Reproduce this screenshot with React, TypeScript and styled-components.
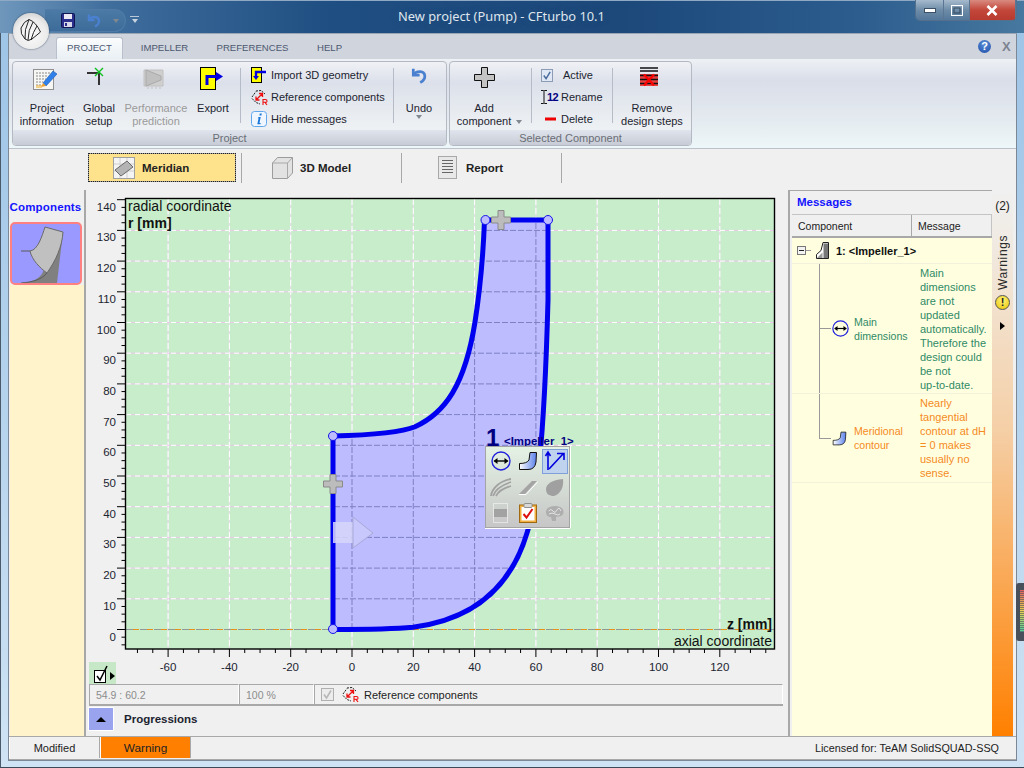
import React from "react";
import styled, { createGlobalStyle } from "styled-components";

const GlobalStyle = createGlobalStyle`
  html, body {
    margin: 0;
    padding: 0;
    width: 1024px;
    height: 768px;
    overflow: hidden;
    font-family: "Liberation Sans", Arial, sans-serif;
    font-size: 11.5px;
    color: #1c2430;
  }
  * { box-sizing: border-box; }
`;

const Win = styled.div`
  position: relative;
  width: 1024px;
  height: 768px;
  display: flex;
  flex-direction: column;
  background: linear-gradient(180deg, #9cc3e6 0, #b9d5ee 60%, #cfe3f4 100%);
  border-bottom: 1px solid #3c4a58;
  border-left: 1px solid #4a5a6a;
  padding-bottom: 6px;
`;

const TitleBar = styled.div`
  height: 33px;
  margin-left: -1px;
  display: flex;
  align-items: flex-start;
  border-top: 1px solid #8fa9c4;
  background: linear-gradient(90deg, #6f97bc 0, #3f6d9c 110px, #1f4e82 330px, #1c487a 620px, #2c5d8e 860px, #47789f 1024px);
`;

const Logo = styled.div`
  position: absolute;
  left: 12px;
  top: 13px;
  width: 36px;
  height: 36px;
  border-radius: 50%;
  background: radial-gradient(circle at 50% 60%, #fafafa 0, #ececec 55%, #bdbdbd 100%);
  box-shadow: 0 0 2px #33475c;
  display: flex;
  align-items: center;
  justify-content: center;
  z-index: 2;
`;

const Qat = styled.div`
  margin: 8px 0 0 45px;
  width: 81px;
  height: 23px;
  padding-left: 16px;
  display: flex;
  align-items: center;
  gap: 12px;
  border: 1px solid #4f7ba6;
  border-left: none;
  border-radius: 0 12px 12px 0;
  background: linear-gradient(180deg, #4c7aa6, #3e6c9a);
`;

const QatMore = styled.span`
  margin: 15px 0 0 4px;
  width: 9px;
  height: 8px;
  border-top: 1px solid #b8c8d8;
  &::after {
    content: "";
    display: block;
    margin: 2px auto 0;
    width: 0;
    border: 3.5px solid transparent;
    border-top: 4px solid #c8d4e0;
    border-bottom: none;
  }
`;

const Caret = styled.span<{ $inline?: boolean }>`
  display: inline-block;
  width: 0;
  border: 3px solid transparent;
  border-top: 4px solid #808890;
  border-bottom: none;
  vertical-align: middle;
  margin-left: ${(p) => (p.$inline ? "5px" : "0")};
  margin-right: ${(p) => (p.$inline ? "-11px" : "0")};
`;

const Title = styled.div`
  margin: 6px 0 0 259px;
  font-family: "Noto Sans", sans-serif;
  font-size: 12.85px;
  line-height: 18px;
  color: #dfe6ee;
  text-shadow: 0 0 6px #2a4f78;
  white-space: nowrap;
`;

const WinButtons = styled.div`
  margin-left: auto;
  margin-top: -1px;
  margin-right: 7px;
  width: 102px;
  height: 21px;
  display: flex;
  border: 1px solid #54708c;
  border-top: none;
  border-radius: 0 0 5px 5px;
  overflow: hidden;
`;

const WinBtn = styled.div<{ $close?: boolean; $w: number }>`
  width: ${(p) => p.$w}px;
  display: flex;
  align-items: center;
  justify-content: center;
  border-right: 1px solid #5a7692;
  background: ${(p) =>
    p.$close
      ? "linear-gradient(180deg, #d98a80 0, #c3473a 50%, #b83a30 100%)"
      : "linear-gradient(180deg, #a6bacd 0, #6e8ca8 50%, #54779a 100%)"};
`;

const Shell = styled.div`
  flex: 1;
  margin: 0 7px;
  display: flex;
  flex-direction: column;
  border: 1px solid #7c8896;
  border-top-color: #9aa6b4;
  background: #f0f0f0;
`;

const TabStrip = styled.div`
  height: 25px;
  display: flex;
  align-items: flex-end;
  padding-left: 47px;
  background: #d0d4dd;
`;

const Tab = styled.div<{ $active?: boolean; $w: number }>`
  width: ${(p) => p.$w}px;
  height: 22px;
  padding-bottom: 2px;
  display: flex;
  align-items: center;
  justify-content: center;
  font-size: 9.6px;
  color: #4c5870;
  border: 1px solid ${(p) => (p.$active ? "#b9c0cb" : "transparent")};
  border-bottom: none;
  border-radius: 3px 3px 0 0;
  background: ${(p) => (p.$active ? "linear-gradient(180deg, #fbfcfd, #e9f0f4)" : "transparent")};
`;

const TabTools = styled.div`
  margin-left: auto;
  height: 25px;
  width: 38px;
  display: flex;
  align-items: center;
  gap: 11px;
`;

const HelpDot = styled.span`
  width: 13px;
  height: 13px;
  border-radius: 50%;
  background: radial-gradient(circle at 50% 30%, #5c8ed8, #1d4ea8);
  color: #fff;
  font-size: 11px;
  font-weight: bold;
  line-height: 13px;
  text-align: center;
`;

const CloseMark = styled.span`
  color: #7c8490;
  font-size: 13px;
  font-weight: bold;
  line-height: 13px;
`;

const Ribbon = styled.div`
  height: 90px;
  padding: 2px 3px 0;
  display: flex;
  gap: 2px;
  border-bottom: 1px solid #bcc2cb;
  background: linear-gradient(180deg, #eef1f5 0, #d9dee9 24%, #e2e8ee 60%, #edf6f8 100%);
`;

const Group = styled.div<{ $w: number }>`
  width: ${(p) => p.$w}px;
  height: 85px;
  display: flex;
  flex-direction: column;
  border: 1px solid #b4b9c3;
  border-radius: 4px;
  overflow: hidden;
  background: linear-gradient(180deg, #eff1f5 0, #dce0ea 25%, #e9edf1 65%, #f3f6f7 100%);
`;

const GroupBody = styled.div`
  height: 68px;
  display: flex;
  align-items: flex-start;
`;

const GroupCaption = styled.div`
  flex: 1;
  text-align: center;
  font-size: 11px;
  line-height: 16px;
  color: #6a6e76;
  background: linear-gradient(180deg, #e0e4ed, #c6cad4);
`;

const LargeButton = styled.div<{ $w: number; $ml?: number; $muted?: boolean }>`
  width: ${(p) => p.$w}px;
  margin-left: ${(p) => p.$ml ?? 0}px;
  padding-top: 5px;
  display: flex;
  flex-direction: column;
  align-items: center;
  text-align: center;
  line-height: 13px;
  font-size: 11px;
  white-space: nowrap;
  color: ${(p) => (p.$muted ? "#9a9a9a" : "#1c2430")};
`;

const LargeIcon = styled.div<{ $shift?: number }>`
  height: 35px;
  padding-right: ${(p) => p.$shift ?? 0}px;
  display: flex;
  align-items: flex-start;
  justify-content: center;
`;

const Sep = styled.div<{ $ml: number }>`
  width: 1px;
  height: 55px;
  margin: 6px 0 0 ${(p) => p.$ml}px;
  background: #b6bcc7;
`;

const SmallList = styled.div<{ $w: number; $ml: number }>`
  width: ${(p) => p.$w}px;
  margin-left: ${(p) => p.$ml}px;
  padding-top: 2px;
  display: flex;
  flex-direction: column;
`;

const SmallItem = styled.div<{ $iconW: number }>`
  height: 22px;
  display: grid;
  grid-template-columns: ${(p) => p.$iconW}px auto;
  align-items: center;
  font-size: 11px;
  white-space: nowrap;
`;

const RenameMark = styled.span`
  display: flex;
  align-items: center;
  font-size: 11px;
  font-weight: bold;
  color: #000080;
  letter-spacing: -0.5px;
`;

const DeleteMark = styled.span`
  display: flex;
  padding-left: 4px;
`;

const ViewBar = styled.div`
  height: 41px;
  padding: 4px 0 0 79px;
  display: flex;
  align-items: flex-start;
`;

const ViewTab = styled.div<{ $active?: boolean; $w: number; $pad: number; $gap?: number }>`
  width: ${(p) => p.$w}px;
  height: 29px;
  padding-left: ${(p) => p.$pad}px;
  display: flex;
  align-items: center;
  gap: ${(p) => p.$gap ?? 7}px;
  font-size: 11.5px;
  font-weight: bold;
  color: #222;
  background: ${(p) => (p.$active ? "#ffe28c" : "transparent")};
  outline: ${(p) => (p.$active ? "1px dotted #222" : "none")};
  outline-offset: -1px;
  border: ${(p) => (p.$active ? "1px solid #999" : "none")};
`;

const ViewSep = styled.div<{ $ml: number }>`
  width: 1px;
  height: 30px;
  margin-left: ${(p) => p.$ml}px;
  background: #a8a8a8;
`;

const Main = styled.div`
  height: 546px;
  display: flex;
`;

const ComponentsPanel = styled.div`
  width: 77px;
  display: flex;
  flex-direction: column;
  border-right: 2px solid #a8a8a8;
`;

const PanelTitle = styled.div`
  height: 32px;
  padding: 11px 2px 0 0;
  text-align: center;
  font-size: 11.5px;
  font-weight: bold;
  letter-spacing: 0.15px;
  white-space: nowrap;
  color: #1414ff;
`;

const Thumb = styled.div`
  margin-left: 1px;
  width: 72px;
  height: 63px;
  border: 2px solid #ff8080;
  border-radius: 5px;
  background: #9999ff;
  overflow: hidden;
`;

const CreamFill = styled.div`
  flex: 1;
  margin-left: 1px;
  background: #fff3cb;
`;

const Center = styled.div`
  width: 702px;
  display: flex;
  flex-direction: column;
`;

const ChartWrap = styled.div`
  position: relative;
  height: 494px;
`;

const ChartSvg = styled.svg`
  display: block;
`;

const Popup = styled.div`
  position: absolute;
  left: 399px;
  top: 256px;
  width: 85px;
  height: 82px;
  padding: 1px;
  display: grid;
  grid-template-columns: repeat(3, 27px);
  grid-template-rows: repeat(3, 26px);
  align-items: center;
  justify-items: center;
  border: 1px solid #a4a4a4;
  background: linear-gradient(180deg, #e4f2e4, #c6c6c6);
  box-shadow: 0 1px 0 #fff, 1px 0 0 #fff;
`;

const PopupCell = styled.div<{ $on?: boolean }>`
  width: 26px;
  height: 25px;
  display: flex;
  align-items: center;
  justify-content: center;
  background: ${(p) => (p.$on ? "#bfd2ee" : "transparent")};
  border: 1px solid ${(p) => (p.$on ? "#7f9fd8" : "transparent")};
`;

const CheckTool = styled.div`
  position: absolute;
  left: 3px;
  bottom: 0;
  width: 27px;
  height: 22px;
  padding: 2px 0 0 5px;
  display: flex;
  align-items: center;
  background: #c6e8c6;
`;

const ToolArrow = styled.span`
  width: 0;
  margin: 3px 0 0 1px;
  border: 4px solid transparent;
  border-left: 5px solid #000;
  border-right: none;
`;

const InfoRow = styled.div`
  height: 22px;
  margin: 0 5px 0 3px;
  display: flex;
  align-items: stretch;
  border-bottom: 2px solid #a8a8a8;
  background: #f0f0f0;
`;

const InfoCell = styled.div<{ $w?: number }>`
  ${(p) => (p.$w ? `width: ${p.$w}px;` : "flex: 1;")}
  padding-left: 6px;
  display: flex;
  align-items: center;
  gap: 8px;
  font-size: 10.5px;
  color: #8c8c8c;
  border-top: 1px solid #a8a8a8;
  border-left: 1px solid #a8a8a8;
  border-right: 1px solid #fff;
`;

const InfoLabel = styled.span`
  margin-left: -3px;
  color: #222;
  font-size: 11px;
`;

const MiniCheck = styled.span`
  width: 13px;
  height: 13px;
  display: flex;
  align-items: center;
  justify-content: center;
  border: 1px solid #b0b0b0;
  background: #ececec;
`;

const Progressions = styled.div`
  flex: 1;
  padding: 2px 0 0 3px;
  display: flex;
  align-items: flex-start;
  gap: 11px;
`;

const Collapser = styled.div`
  width: 24px;
  height: 22px;
  display: flex;
  align-items: center;
  justify-content: center;
  background: #9aa4ee;
  box-shadow: 0 0 0 1px #fff;
  &::after {
    content: "";
    border: 5px solid transparent;
    border-bottom: 5px solid #000;
    border-top: none;
  }
`;

const ProgressLabel = styled.span`
  font-size: 11.5px;
  font-weight: bold;
  line-height: 22px;
  color: #1c2430;
`;

const MessagesPanel = styled.div`
  width: 204px;
  display: flex;
  flex-direction: column;
  border-left: 2px solid #a8a8a8;
  border-top: 1px solid #a8a8a8;
`;

const MessagesHead = styled.div`
  height: 23px;
  padding: 5px 0 0 7px;
  font-size: 11.5px;
  font-weight: bold;
  color: #1414ff;
`;

const Columns = styled.div`
  height: 24px;
  display: grid;
  grid-template-columns: 120px 80px;
  margin-left: 2px;
  border-top: 1px solid #c4c4c4;
  border-bottom: 2px solid #a8a8a8;
`;

const ColumnHead = styled.div<{ $last?: boolean }>`
  padding-left: 6px;
  display: flex;
  align-items: center;
  font-size: 10.5px;
  color: #222;
  border-right: 1px solid ${(p) => (p.$last ? "#c4c4c4" : "#a8a8a8")};
`;

const Tree = styled.div`
  flex: 1;
  margin-left: 2px;
  background: #ffffe0;
`;

const RootRow = styled.div`
  height: 26px;
  padding-left: 5px;
  display: flex;
  align-items: center;
  font-size: 11px;
  font-weight: bold;
  color: #111;
  border-bottom: 1px solid #f1f1dc;
`;

const RootName = styled.span`
  margin-left: 7px;
`;

const Expander = styled.span`
  width: 9px;
  height: 9px;
  display: flex;
  align-items: center;
  justify-content: center;
  border: 1px solid #777;
  background: #f2f2f2;
  &::after {
    content: "";
    width: 5px;
    height: 1px;
    background: #222;
  }
`;

const Stub = styled.span`
  width: 5px;
  height: 1px;
  margin-right: 5px;
  background: #999;
`;

const MsgRow = styled.div<{ $h: number; $tone: string }>`
  height: ${(p) => p.$h}px;
  display: flex;
  color: ${(p) => p.$tone};
  border-bottom: 1px solid #f1f1dc;
  line-height: 14px;
`;

const Connector = styled.div`
  width: 39px;
  padding-left: 27px;
  display: flex;
  flex-direction: column;
`;

const ConnTop = styled.div`
  flex: 1;
  border-left: 1px solid #999;
  border-bottom: 1px solid #999;
`;

const ConnBottom = styled.div<{ $end?: boolean }>`
  flex: 1;
  border-left: 1px solid ${(p) => (p.$end ? "transparent" : "#999")};
`;

const MsgIcon = styled.div`
  width: 23px;
  padding-left: 1px;
  display: flex;
  align-items: center;
`;

const MsgName = styled.div`
  width: 66px;
  font-size: 10.6px;
  align-self: center;
`;

const MsgText = styled.div`
  width: 72px;
  padding-top: 2px;
  font-size: 11px;
  white-space: nowrap;
`;

const WarnStrip = styled.div`
  flex: 1;
  padding-top: 9px;
  display: flex;
  flex-direction: column;
  align-items: center;
  font-size: 12px;
  background: linear-gradient(180deg, #f0f0f0 0, #f0ece6 7%, #f5cfa6 44%, #ff8000 100%);
`;

const WarnCount = styled.div`
  height: 35px;
  color: #222;
`;

const WarnText = styled.div`
  writing-mode: vertical-rl;
  transform: rotate(180deg);
  font-size: 12px;
  letter-spacing: 0.6px;
  height: 56px;
  text-align: left;
  color: #2a2a2a;
`;

const WarnDot = styled.div`
  width: 15px;
  height: 15px;
  margin-top: 5px;
  border-radius: 50%;
  border: 1px solid #555;
  background: radial-gradient(circle at 50% 35%, #fff27a, #e8c400);
  color: #222;
  font-size: 11px;
  font-weight: bold;
  line-height: 13px;
  text-align: center;
`;

const WarnArrow = styled.div`
  margin-top: 12px;
  width: 0;
  border: 4px solid transparent;
  border-left: 5px solid #000;
  border-right: none;
`;

const RightCol = styled.div`
  width: 225px;
  display: flex;
  height: 100%;
`;

const StatusBar = styled.div`
  height: 24px;
  padding-bottom: 1px;
  display: flex;
  border-top: 1px solid #a8a8a8;
  border-bottom: 1px solid #a8a8a8;
  font-size: 11px;
`;

const StatusCell = styled.div<{ $warn?: boolean }>`
  width: 91px;
  display: flex;
  align-items: center;
  justify-content: center;
  font-size: ${(p) => (p.$warn ? "11.8px" : "11px")};
  color: #222;
  background: ${(p) => (p.$warn ? "#ff8000" : "#f0f0f0")};
  border-right: 1px solid #a8a8a8;
  border-left: 1px solid #fff;
`;

const License = styled.div`
  flex: 1;
  padding-right: 17px;
  display: flex;
  align-items: center;
  justify-content: flex-end;
  font-size: 10.8px;
  color: #222;
`;

const Gadget = styled.div`
  position: absolute;
  right: 0;
  top: 583px;
  width: 8px;
  height: 58px;
  padding: 7px 0 0 4px;
  background: #48505c;
  border-radius: 3px 0 0 3px;
`;

const GadgetBars = styled.div`
  width: 4px;
  height: 42px;
  background: repeating-linear-gradient(180deg, transparent 0 1px, rgba(72, 80, 92, 0.6) 1px 2px),
    linear-gradient(180deg, #e06060 0, #e8d050 50%, #50d0a0 100%);
`;

const ActiveBox = styled.span`
  width: 12px;
  height: 13px;
  display: flex;
  align-items: center;
  justify-content: center;
  border: 1px solid #8c9cb4;
  background: #dfe8f4;
`;

const IconLogo = () => (
  <svg width="26" height="26" viewBox="0 0 26 26" fill="none" stroke="#222" strokeWidth="1">
    <path d="M3 10Q6 3 11 1.5Q18 4 22.5 14L14 21Q10 24 7 21Q2 16 3 10Z" />
    <path d="M7 21Q6 12 11 1.5M10 22Q10 12 15 4M13 22Q15 14 19 8" />
  </svg>
);

const IconSave = () => (
  <svg width="14" height="15" viewBox="0 0 14 15">
    <rect x="0.5" y="0.5" width="13" height="14" rx="1" fill="#2a2f8c" stroke="#101450" />
    <rect x="3" y="1" width="8" height="5" fill="#e8e8f4" />
    <rect x="3" y="9" width="8" height="5" fill="#d8d8e8" />
    <rect x="4" y="10" width="2" height="3" fill="#2a2f8c" />
  </svg>
);

const IconUndo = ({ c = "#4a80d0", s = 1 }: { c?: string; s?: number }) => (
  <svg width={14 * s} height={15 * s} viewBox="0 0 14 15" fill="none" stroke={c} strokeWidth="2.4">
    <path d="M2 1.5V7H7.5" />
    <path d="M2.5 6.5C5 3 11.5 3 12 7.5C12.3 10.5 10 12.5 8 13.5" />
  </svg>
);

const IconProject = () => (
  <svg width="24" height="24" viewBox="0 0 24 24">
    <rect x="0.5" y="2.5" width="20" height="20" fill="#f6f6f4" stroke="#909090" />
    <path d="M3 6H17M3 9H15M3 12H13M3 15H10M3 18H9" stroke="#8a8a8a" strokeWidth="1.2" strokeDasharray="2 1" />
    <path d="M10 16L20 4L24 7L13 19Z" fill="#2f80e8" stroke="#1c5cb0" strokeWidth="0.6" />
    <path d="M10 16L13 19L8 20Z" fill="#f0a030" />
    <path d="M3 18H9V21H3Z" fill="#f0c060" opacity="0.7" />
  </svg>
);

const IconGlobal = () => (
  <svg width="24" height="24" viewBox="0 0 24 24">
    <path d="M0 6H12V18" fill="none" stroke="#333" strokeWidth="2" />
    <path d="M8 1L16 9M16 1L8 9" stroke="#10c020" strokeWidth="1.4" />
  </svg>
);

const IconPerf = () => (
  <svg width="22" height="22" viewBox="0 0 22 22">
    <path d="M1 3H20V19H1Z" fill="#cfcfcf" stroke="#c0c0c0" />
    <path d="M3 3L18 9V13L3 19Z" fill="#c0c0c0" stroke="#aaaaaa" />
    <path d="M5 20v2M9 20v2M13 20v2M17 20v2" stroke="#c0c0c0" />
  </svg>
);

const IconExport = () => (
  <svg width="24" height="23" viewBox="0 0 24 23">
    <rect x="0.5" y="0.5" width="15" height="22" fill="#ffff00" stroke="#000" />
    <path d="M7 18V9.5H17" fill="none" stroke="#0000e0" strokeWidth="3" />
    <path d="M16 5L23 9.5L16 14Z" fill="#0000e0" />
  </svg>
);

const IconImport = () => (
  <svg width="16" height="16" viewBox="0 0 16 16">
    <rect x="0.5" y="0.5" width="10" height="15" fill="#ffff00" stroke="#000" />
    <path d="M15 5H5V9" fill="none" stroke="#0000e0" strokeWidth="2.4" />
    <path d="M2 9H8L5 13Z" fill="#0000e0" />
  </svg>
);

const IconReference = () => (
  <svg width="17" height="17" viewBox="0 0 17 17" fill="none">
    <path d="M1 8L5 2.5M5 2L10 1.5L14 5M1 9.5L5 13.5L9 15" stroke="#222" strokeWidth="1" strokeDasharray="2 1" />
    <path d="M5 11L11 5M8 4.5H11.5V8M5 7.5V11H8.5" stroke="#ee1010" strokeWidth="1.3" />
    <path d="M12 16V10.5H14.5Q16 10.5 16 12T14.5 13.3H12M14 13.3L16 16" stroke="#ee1010" strokeWidth="1.1" />
  </svg>
);

const IconInfo = () => (
  <svg width="16" height="16" viewBox="0 0 16 16">
    <rect x="0.5" y="0.5" width="15" height="15" rx="3" fill="#f0f6ff" stroke="#62a6ec" />
    <path d="M8.8 2.5h2l-.4 2h-2zM7.7 6h2L8.5 12h1.2l-.2 1.2H6.3L7.6 7.2H6.6Z" fill="#1c78d8" />
  </svg>
);

const IconPlus = () => (
  <svg width="21" height="21" viewBox="0 0 21 21">
    <path d="M7.5 0.5H13.5V7.5H20.5V13.5H13.5V20.5H7.5V13.5H0.5V7.5H7.5Z" fill="#c4c4c4" stroke="#111" />
  </svg>
);

const IconCheck = ({ c = "#4a6c9c" }: { c?: string }) => (
  <svg width="11" height="11" viewBox="0 0 11 11" fill="none" stroke={c} strokeWidth="1.6">
    <path d="M2 5.5L4.5 9L9 1.5" />
  </svg>
);

const IconToolCheck = () => (
  <svg width="15" height="18" viewBox="0 0 15 18" fill="none">
    <rect x="0.5" y="5.5" width="11" height="12" fill="#fff" stroke="#000" />
    <path d="M3 11L6 15L13 1" stroke="#000" strokeWidth="1.5" />
  </svg>
);

const IconIBeam = () => (
  <svg width="6" height="14" viewBox="0 0 6 14" fill="none" stroke="#111">
    <path d="M0 .5H2.5L3 1L3.5 .5H6M3 1V13M0 13.5H2.5L3 13L3.5 13.5H6" />
  </svg>
);

const IconMinus = () => (
  <svg width="12" height="4" viewBox="0 0 12 4">
    <rect width="11" height="3" y="0.5" fill="#ee0000" />
  </svg>
);

const IconRemove = () => (
  <svg width="20" height="19" viewBox="0 0 20 19">
    <path d="M1 1H19M1 4H19" stroke="#111" strokeWidth="1.5" />
    <rect x="1" y="7" width="18" height="12" fill="#e84040" />
    <path d="M1 8.5H19M1 12.5H19M1 16.5H19" stroke="#111" strokeWidth="1.6" />
    <path d="M5 7.5L15 18.5M15 7.5L5 18.5" stroke="#ff0000" strokeWidth="2.2" />
  </svg>
);

const IconMeridian = () => (
  <svg width="22" height="22" viewBox="0 0 22 22">
    <rect x="0.5" y="0.5" width="21" height="21" fill="#f4f4f4" stroke="#a0a0a0" />
    <path d="M7 1V21M14 1V21M1 7H21M1 14H21" stroke="#d0d0d0" />
    <path d="M2 13L14 4L20 10L8 19Z" fill="#b4b4b4" stroke="#6a6a6a" />
  </svg>
);

const IconCube = () => (
  <svg width="21" height="22" viewBox="0 0 21 22">
    <path d="M0.5 6L5.5 0.5H20.5V16L15.5 21.5H0.5Z" fill="#e2e2e2" stroke="#9c9c9c" />
    <path d="M0.5 6H15.5V21.5M15.5 6L20.5 .5" fill="none" stroke="#a8a8a8" />
  </svg>
);

const IconReport = () => (
  <svg width="19" height="23" viewBox="0 0 19 23">
    <rect x="0.5" y="0.5" width="18" height="22" fill="#e8e8e8" stroke="#a8a8a8" />
    <path d="M4 4.5H15M4 7.5H15M4 10.5H15M4 13.5H15M4 16.5H15" stroke="#666" />
  </svg>
);

const IconDims = ({ size = 20 }: { size?: number }) => (
  <svg width={size} height={size} viewBox="0 0 20 20" fill="none">
    <circle cx="10" cy="10" r="9" stroke="#2222dd" strokeWidth="1.4" />
    <path d="M3.5 10H16.5" stroke="#000" strokeWidth="1.4" />
    <path d="M2.5 10L6.5 7V13ZM17.5 10L13.5 7V13Z" fill="#000" />
  </svg>
);

const IconContour = ({ gid, size = 20 }: { gid: string; size?: number }) => (
  <svg width={size} height={size} viewBox="0 0 20 20">
    <defs>
      <linearGradient id={gid} x1="0" x2="1">
        <stop offset="0" stopColor="#ffffff" />
        <stop offset="1" stopColor="#5a80ea" />
      </linearGradient>
    </defs>
    <path d="M1.5 18.5V12.5Q9 12.5 11 9L12 1.5H18.5L18 11Q17 18.5 10 18.5Z" fill={`url(#${gid})`} stroke="#111" />
  </svg>
);

const IconAxes = () => (
  <svg width="22" height="22" viewBox="0 0 22 22" fill="none" stroke="#0000dd" strokeWidth="1.6">
    <path d="M4 20V3M1.5 6L4 2L6.5 6" />
    <path d="M5 19L19 4M13 3.5H20V10" />
  </svg>
);

const IconBlades = () => (
  <svg width="22" height="20" viewBox="0 0 22 20" fill="none" stroke="#a2a2a2" strokeWidth="1.8">
    <path d="M1 19C2 11 10 4 21 2" />
    <path d="M3 19C5 13 12 8 21 5" />
    <path d="M6 19C8 15 14 11 21 9" />
  </svg>
);

const IconSlash = () => (
  <svg width="20" height="16" viewBox="0 0 20 16">
    <path d="M1 15L14 2H19L7 15Z" fill="#a4a4a4" />
    <path d="M1 15.5H8L20 2.5" fill="none" stroke="#fff" />
  </svg>
);

const IconBlob = () => (
  <svg width="19" height="19" viewBox="0 0 19 19">
    <path d="M1 11C1 6 7 2 18 1C19 8 16 16 9 18C4 18 1 16 1 11Z" fill="#a0a0a0" />
  </svg>
);

const IconBand = () => (
  <svg width="15" height="20" viewBox="0 0 15 20">
    <rect x="0.5" y="0.5" width="14" height="19" fill="none" stroke="#fff" strokeDasharray="1 1" />
    <rect x="1" y="6" width="13" height="8" fill="#a2a2a2" />
  </svg>
);

const IconClipboard = () => (
  <svg width="18" height="20" viewBox="0 0 18 20">
    <rect x="0.5" y="2" width="17" height="17.5" fill="#f0b040" stroke="#a06810" />
    <rect x="2.5" y="4" width="13" height="13.5" fill="#ffffff" />
    <rect x="5" y="0.5" width="8" height="4" rx="1" fill="#d8d8d8" stroke="#909090" />
    <path d="M4.5 11L7.5 14.5L13.5 6" fill="none" stroke="#dd1010" strokeWidth="2" />
  </svg>
);

const IconBrain = () => (
  <svg width="19" height="17" viewBox="0 0 19 17">
    <path d="M1 7C1 3 5 1 10 1C15 1 18.5 3 18.5 7C18.5 10 16 11.5 13 11.5L11 12L11 16H7L6 12C3 12 1 10 1 7Z" fill="#aeaeae" />
    <path d="M3.5 6Q6 3 8 6T12 5T16 6M4 9Q7 7 10 9T15 9" fill="none" stroke="#e4e4e4" />
  </svg>
);

const IconImpeller = () => (
  <svg width="13" height="17" viewBox="0 0 13 17">
    <path d="M0.5 16.5V12.5L5 8.5L7 0.5H12.5V16.5Z" fill="#fff" stroke="#222" />
    <path d="M1 16L6.5 10.5V16Z" fill="#999" />
    <path d="M7.5 1.5H12V16H7.5Z" fill="#777" />
  </svg>
);

const ThumbArt = () => (
  <svg width="68" height="59" viewBox="2 2 68 59">
    <path d="M53 10L47 61H11C28 60 38 53 35 30Z" fill="#808080" />
    <path d="M35 5L53 10C52 25 46 38 37 51C30 46 22 38 20 29C28 28 32 14 35 5Z" fill="#c0c0c0" stroke="#6a6a6a" />
    <path d="M11 29H20M11 61C24 60 32 57 37 51" fill="none" stroke="#5a5a5a" />
  </svg>
);

// chart scale, page coordinates of the plot
const zx = (z: number) => 352 + z * 3.065;
const ry = (r: number) => 629.5 - r * 3.07;
const range = (from: number, to: number, step: number) => {
  const out: number[] = [];
  for (let v = from; v <= to + 0.001; v += step) out.push(v);
  return out;
};

const outline =
  "M333 629.5L333 436C370 435 400 433 415 426.7C445 413 465 385 475 322C480 290 483 260 484.5 220" +
  "L548 220L548 300C544 450 536 505 527 533C510 590 470 620 413 627.3C395 629 370 629.5 333 629.5Z";

const gridX = range(-60, 120, 20);
const gridY = range(10, 130, 10);

const Cross = ({ x, y }: { x: number; y: number }) => (
  <path
    d={`M${x - 3} ${y - 9.5}h6v6.5h6.5v6h-6.5v6.5h-6v-6.5h-6.5v-6h6.5z`}
    fill="#bcbcbc"
    stroke="#8a8a8a"
    strokeWidth="1"
  />
);

const Chart = () => (
  <ChartSvg width="702" height="494" viewBox="86 190 702 494">
    <defs>
      <clipPath id="meridian-shape">
        <path d={outline} />
      </clipPath>
    </defs>
    <rect x="125.5" y="198.5" width="649" height="450.5" fill="#c8edcb" />
    {gridX.map((z) => (
      <g key={z}>
        <line x1={zx(z)} x2={zx(z)} y1="199" y2="649" stroke="#e9dcec" strokeWidth="1" />
        <line x1={zx(z)} x2={zx(z)} y1="199" y2="649" stroke="#fff" strokeWidth="1" strokeDasharray="6 3" />
      </g>
    ))}
    {gridY.map((r) => (
      <g key={r}>
        <line x1="126" x2="774" y1={ry(r)} y2={ry(r)} stroke="#ecc8ec" strokeWidth="1" />
        <line x1="126" x2="774" y1={ry(r)} y2={ry(r)} stroke="#fff" strokeWidth="1" strokeDasharray="5 4" />
      </g>
    ))}
    <path d={outline} fill="#bcbcff" />
    <g clipPath="url(#meridian-shape)">
      {gridX.map((z) => (
        <line key={z} x1={zx(z)} x2={zx(z)} y1="199" y2="649" stroke="#7f7fc4" strokeWidth="1" strokeDasharray="6 2" />
      ))}
      {gridY.map((r) => (
        <line key={r} x1="126" x2="774" y1={ry(r)} y2={ry(r)} stroke="#7f7fc4" strokeWidth="1" strokeDasharray="6 2" />
      ))}
    </g>
    <line x1="126" x2="774" y1="629.5" y2="629.5" stroke="#909898" strokeWidth="1" strokeDasharray="8 6" />
    <line x1="126" x2="774" y1="629.5" y2="629.5" stroke="#e89018" strokeWidth="1" strokeDasharray="6 8" strokeDashoffset="7" />
    <path d={outline} fill="none" stroke="#0000f0" strokeWidth="5" />
    <rect x="333" y="522" width="20" height="21" fill="#d6d6fa" opacity="0.85" />
    <path d="M353 517L373 533L353 548Z" fill="#c8c8fc" stroke="#a8a8d8" strokeWidth="1" />
    {[
      [333, 436],
      [333, 629],
      [485.5, 220],
      [548, 220],
    ].map(([x, y]) => (
      <circle key={`${x}-${y}`} cx={x} cy={y} r="4.5" fill="#bcbcff" stroke="#1414e8" strokeWidth="1" />
    ))}
    <Cross x={501} y={220} />
    <Cross x={333} y={484} />
    <rect x="125.5" y="198.5" width="649" height="450.5" fill="none" stroke="#000" strokeWidth="1.4" />
    {range(-5, 140, 2.5).map((r) => (
      <line key={r} x1={r % 10 === 0 ? 117 : 121.5} x2="125" y1={ry(r)} y2={ry(r)} stroke="#000" strokeWidth="1" />
    ))}
    {range(-70, 135, 5).map((z) => (
      <line key={z} x1={zx(z)} x2={zx(z)} y1="649" y2={z % 20 === 0 ? 657 : 653} stroke="#000" strokeWidth="1" />
    ))}
    <g fontFamily="Liberation Sans, Arial, sans-serif" fontSize="11.5" fill="#1c2430">
      {range(0, 140, 10).map((r) => (
        <text key={r} x="116" y={ry(r) + 11} textAnchor="end">
          {r}
        </text>
      ))}
      {gridX.map((z) => (
        <text key={z} x={zx(z)} y="671" textAnchor="middle">
          {z}
        </text>
      ))}
    </g>
    <g fontFamily="Liberation Sans, Arial, sans-serif" fontSize="14" fill="#111">
      <text x="128" y="211">
        radial coordinate
      </text>
      <text x="128" y="228" fontWeight="bold">
        r [mm]
      </text>
      <text x="772" y="629" textAnchor="end" fontWeight="bold">
        z [mm]
      </text>
      <text x="772" y="646" textAnchor="end">
        axial coordinate
      </text>
    </g>
    <g fontFamily="Liberation Sans, Arial, sans-serif" fill="#000080" fontWeight="bold">
      <text x="486" y="446" fontSize="24">
        1
      </text>
      <text x="504" y="445" fontSize="11.4">
        {"<Impeller_1>"}
      </text>
    </g>
  </ChartSvg>
);

export default function App() {
  return (
    <>
      <GlobalStyle />
      <Win>
        <Logo>
          <IconLogo />
        </Logo>
        <TitleBar>
          <Qat>
            <IconSave />
            <IconUndo />
            <Caret />
          </Qat>
          <QatMore />
          <Title>New project (Pump) - CFturbo 10.1</Title>
          <WinButtons>
            <WinBtn $w={29}>
              <svg width="12" height="5" viewBox="0 0 12 5">
                <rect x="0.5" y="0.5" width="11" height="4" fill="#fff" stroke="#3c5068" />
              </svg>
            </WinBtn>
            <WinBtn $w={26}>
              <svg width="12" height="11" viewBox="0 0 12 11">
                <rect x="0.5" y="0.5" width="11" height="10" fill="none" stroke="#fff" />
                <rect x="3" y="3" width="6" height="5" fill="none" stroke="#33475c" />
              </svg>
            </WinBtn>
            <WinBtn $w={47} $close>
              <svg width="12" height="11" viewBox="0 0 12 11" stroke="#fff" strokeWidth="2.6">
                <path d="M1.5 1L10.5 10M10.5 1L1.5 10" />
              </svg>
            </WinBtn>
          </WinButtons>
        </TitleBar>
        <Shell>
          <TabStrip>
            <Tab $active $w={67}>
              PROJECT
            </Tab>
            <Tab $w={83}>IMPELLER</Tab>
            <Tab $w={93}>PREFERENCES</Tab>
            <Tab $w={61}>HELP</Tab>
            <TabTools>
              <HelpDot>?</HelpDot>
              <CloseMark>X</CloseMark>
            </TabTools>
          </TabStrip>
          <Ribbon>
            <Group $w={435}>
              <GroupBody>
                <LargeButton $w={68}>
                  <LargeIcon $shift={5}>
                    <IconProject />
                  </LargeIcon>
                  Project
                  <br />
                  information
                </LargeButton>
                <LargeButton $w={36}>
                  <LargeIcon>
                    <IconGlobal />
                  </LargeIcon>
                  Global
                  <br />
                  setup
                </LargeButton>
                <LargeButton $w={78} $muted>
                  <LargeIcon $shift={5}>
                    <IconPerf />
                  </LargeIcon>
                  Performance
                  <br />
                  prediction
                </LargeButton>
                <LargeButton $w={36}>
                  <LargeIcon $shift={3}>
                    <IconExport />
                  </LargeIcon>
                  Export
                </LargeButton>
                <Sep $ml={9} />
                <SmallList $w={142} $ml={10}>
                  <SmallItem $iconW={20}>
                    <IconImport />
                    Import 3D geometry
                  </SmallItem>
                  <SmallItem $iconW={20}>
                    <IconReference />
                    Reference components
                  </SmallItem>
                  <SmallItem $iconW={20}>
                    <IconInfo />
                    Hide messages
                  </SmallItem>
                </SmallList>
                <Sep $ml={0} />
                <LargeButton $w={40} $ml={5}>
                  <LargeIcon>
                    <IconUndo s={1.15} />
                  </LargeIcon>
                  Undo
                  <br />
                  <Caret />
                </LargeButton>
              </GroupBody>
              <GroupCaption>Project</GroupCaption>
            </Group>
            <Group $w={243}>
              <GroupBody>
                <LargeButton $w={68}>
                  <LargeIcon>
                    <IconPlus />
                  </LargeIcon>
                  Add
                  <br />
                  <span>
                    component
                    <Caret $inline />
                  </span>
                </LargeButton>
                <Sep $ml={13} />
                <SmallList $w={71} $ml={9}>
                  <SmallItem $iconW={22}>
                    <ActiveBox>
                      <IconCheck />
                    </ActiveBox>
                    Active
                  </SmallItem>
                  <SmallItem $iconW={20}>
                    <RenameMark>
                      <IconIBeam />
                      12
                    </RenameMark>
                    Rename
                  </SmallItem>
                  <SmallItem $iconW={20}>
                    <DeleteMark>
                      <IconMinus />
                    </DeleteMark>
                    Delete
                  </SmallItem>
                </SmallList>
                <Sep $ml={0} />
                <LargeButton $w={70} $ml={4}>
                  <LargeIcon $shift={6}>
                    <IconRemove />
                  </LargeIcon>
                  Remove
                  <br />
                  design steps
                </LargeButton>
              </GroupBody>
              <GroupCaption>Selected Component</GroupCaption>
            </Group>
          </Ribbon>
          <ViewBar>
            <ViewTab $active $w={148} $pad={24}>
              <IconMeridian />
              Meridian
            </ViewTab>
            <ViewSep $ml={5} />
            <ViewTab $w={159} $pad={30}>
              <IconCube />
              3D Model
            </ViewTab>
            <ViewSep $ml={0} />
            <ViewTab $w={159} $pad={36} $gap={9}>
              <IconReport />
              Report
            </ViewTab>
            <ViewSep $ml={0} />
          </ViewBar>
          <Main>
            <ComponentsPanel>
              <PanelTitle>Components</PanelTitle>
              <Thumb>
                <ThumbArt />
              </Thumb>
              <CreamFill />
            </ComponentsPanel>
            <Center>
              <ChartWrap>
                <Chart />
                <Popup>
                  <PopupCell>
                    <IconDims />
                  </PopupCell>
                  <PopupCell>
                    <IconContour gid="contour-popup" />
                  </PopupCell>
                  <PopupCell $on>
                    <IconAxes />
                  </PopupCell>
                  <PopupCell>
                    <IconBlades />
                  </PopupCell>
                  <PopupCell>
                    <IconSlash />
                  </PopupCell>
                  <PopupCell>
                    <IconBlob />
                  </PopupCell>
                  <PopupCell>
                    <IconBand />
                  </PopupCell>
                  <PopupCell>
                    <IconClipboard />
                  </PopupCell>
                  <PopupCell>
                    <IconBrain />
                  </PopupCell>
                </Popup>
                <CheckTool>
                  <IconToolCheck />
                  <ToolArrow />
                </CheckTool>
              </ChartWrap>
              <InfoRow>
                <InfoCell $w={150}>54.9 : 60.2</InfoCell>
                <InfoCell $w={75}>100 %</InfoCell>
                <InfoCell>
                  <MiniCheck>
                    <IconCheck c="#b8b8b8" />
                  </MiniCheck>
                  <IconReference />
                  <InfoLabel>Reference components</InfoLabel>
                </InfoCell>
              </InfoRow>
              <Progressions>
                <Collapser />
                <ProgressLabel>Progressions</ProgressLabel>
              </Progressions>
            </Center>
            <RightCol>
              <MessagesPanel>
                <MessagesHead>Messages</MessagesHead>
                <Columns>
                  <ColumnHead>Component</ColumnHead>
                  <ColumnHead $last>Message</ColumnHead>
                </Columns>
                <Tree>
                  <RootRow>
                    <Expander />
                    <Stub />
                    <IconImpeller />
                    <RootName>{"1: <Impeller_1>"}</RootName>
                  </RootRow>
                  <MsgRow $h={130} $tone="#2f8a66">
                    <Connector>
                      <ConnTop />
                      <ConnBottom />
                    </Connector>
                    <MsgIcon>
                      <IconDims size={17} />
                    </MsgIcon>
                    <MsgName>
                      Main
                      <br />
                      dimensions
                    </MsgName>
                    <MsgText>
                      Main
                      <br />
                      dimensions
                      <br />
                      are not
                      <br />
                      updated
                      <br />
                      automatically.
                      <br />
                      Therefore the
                      <br />
                      design could
                      <br />
                      be not
                      <br />
                      up-to-date.
                    </MsgText>
                  </MsgRow>
                  <MsgRow $h={89} $tone="#f58a1e">
                    <Connector>
                      <ConnTop />
                      <ConnBottom $end />
                    </Connector>
                    <MsgIcon>
                      <IconContour gid="contour-msg" size={15} />
                    </MsgIcon>
                    <MsgName>
                      Meridional
                      <br />
                      contour
                    </MsgName>
                    <MsgText>
                      Nearly
                      <br />
                      tangential
                      <br />
                      contour at dH
                      <br />
                      = 0 makes
                      <br />
                      usually no
                      <br />
                      sense.
                    </MsgText>
                  </MsgRow>
                </Tree>
              </MessagesPanel>
              <WarnStrip>
                <WarnCount>(2)</WarnCount>
                <WarnText>Warnings</WarnText>
                <WarnDot>!</WarnDot>
                <WarnArrow />
              </WarnStrip>
            </RightCol>
          </Main>
          <StatusBar>
            <StatusCell>Modified</StatusCell>
            <StatusCell $warn>Warning</StatusCell>
            <License>Licensed for: TeAM SolidSQUAD-SSQ</License>
          </StatusBar>
        </Shell>
        <Gadget>
          <GadgetBars />
        </Gadget>
      </Win>
    </>
  );
}
